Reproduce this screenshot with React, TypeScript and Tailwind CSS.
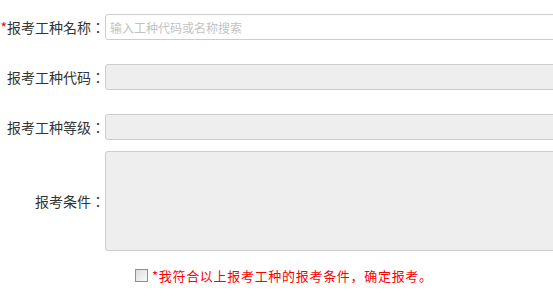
import { useState } from 'react'

const font = { fontFamily: '"Noto Sans CJK SC", "Microsoft YaHei", sans-serif' }
const labelFont = { fontFamily: '"Noto Sans CJK TC", "Noto Sans CJK SC", sans-serif' }

function Label({ children }: { children: React.ReactNode }) {
  return (
    <label className="w-[105px] shrink-0 text-right whitespace-nowrap leading-none" style={labelFont}>
      {children}
    </label>
  )
}

export default function App() {
  const [agree, setAgree] = useState(false)
  const [keyword, setKeyword] = useState('')

  return (
    <div
      className="w-[553px] h-[302px] overflow-hidden bg-white text-[14px] text-[#333] [text-spacing-trim:space-all]"
      style={font}
    >
      <div className="pt-[14px]">
        {/* 工种名称 */}
        <div className="flex items-center h-[26px]">
          <Label>
            <span className="text-[#f00]">*</span>报考工种名称：
          </Label>
          <input
            value={keyword}
            onChange={(e) => setKeyword(e.target.value)}
            placeholder="输入工种代码或名称搜索"
            className="w-[470px] shrink-0 h-[26px] border border-[#ccc] rounded-[3px] px-[4px] text-[12px] outline-none placeholder:text-[#c2c2c2]"
          />
        </div>

        {/* 工种代码 */}
        <div className="flex items-center h-[26px] mt-[24px]">
          <Label>报考工种代码：</Label>
          <div className="w-[470px] shrink-0 h-[26px] border border-[#ccc] rounded-[3px] bg-[#eee]" />
        </div>

        {/* 工种等级 */}
        <div className="flex items-center h-[26px] mt-[24px]">
          <Label>报考工种等级：</Label>
          <div className="w-[470px] shrink-0 h-[26px] border border-[#ccc] rounded-[3px] bg-[#eee]" />
        </div>

        {/* 报考条件 */}
        <div className="flex items-center h-[100px] mt-[11px]">
          <Label>报考条件：</Label>
          <div className="w-[470px] shrink-0 h-[100px] border border-[#ccc] rounded-[3px] bg-[#eee]" />
        </div>

        {/* 确认 */}
        <div className="flex items-center mt-[17px] pl-[135px] h-[14px]">
          <button
            onClick={() => setAgree(!agree)}
            className="w-[13px] h-[13px] shrink-0 border border-[#8e8e8e] bg-gradient-to-br from-[#dcdcdc] to-[#fafafa] flex items-center justify-center"
          >
            {agree && (
              <svg viewBox="0 0 10 10" className="w-[9px] h-[9px]">
                <path d="M1.5 5 L4 7.5 L8.5 2" fill="none" stroke="#333" strokeWidth="1.6" />
              </svg>
            )}
          </button>
          <span className="ml-[4px] text-[13px] tracking-[0.7px] text-[#f00] leading-none whitespace-nowrap">
            *我符合以上报考工种的报考条件，确定报考。
          </span>
        </div>
      </div>
    </div>
  )
}
